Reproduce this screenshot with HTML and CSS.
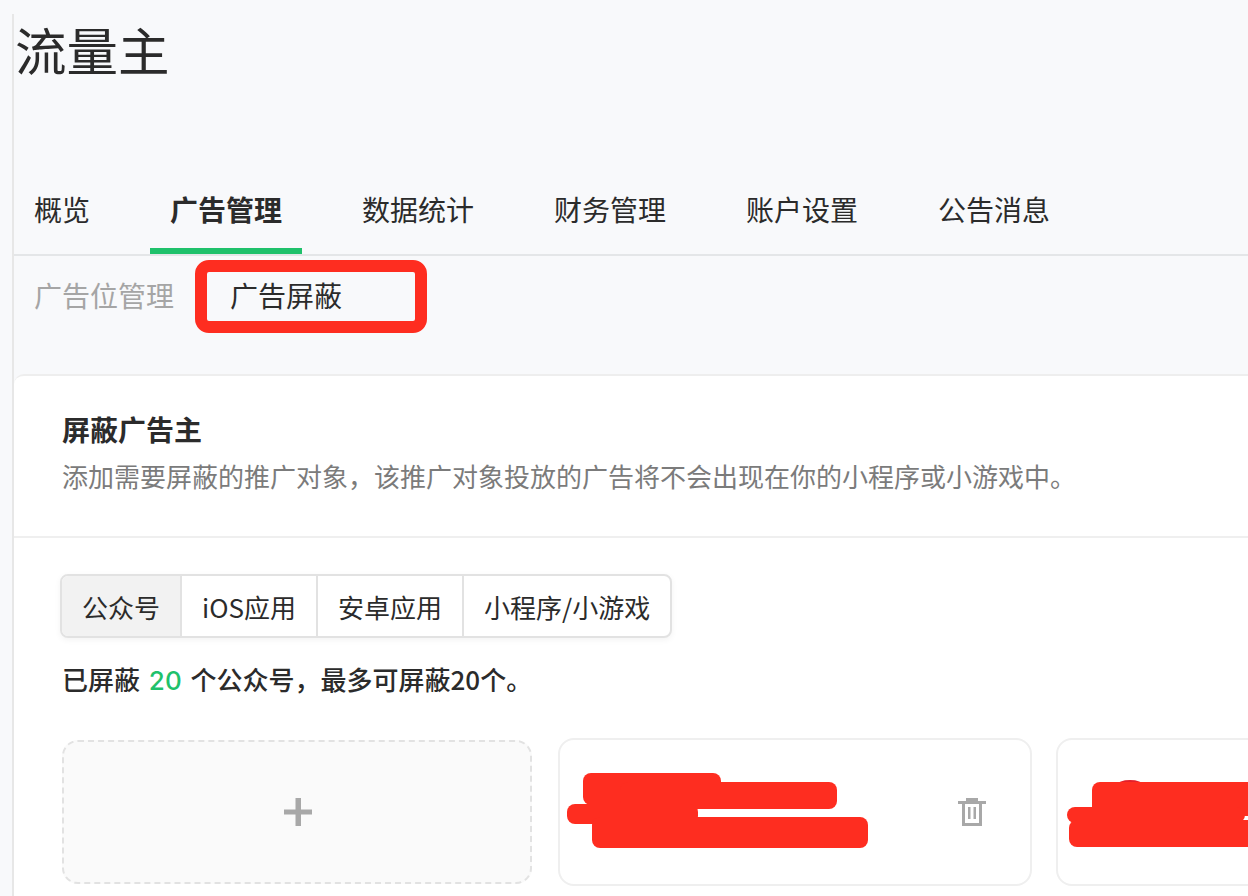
FILE: index.html
```html
<!DOCTYPE html>
<html lang="zh-CN">
<head>
<meta charset="utf-8">
<title>流量主</title>
<link rel="stylesheet" href="styles.css">
</head>
<body>
<div class="page">
  <h1 class="title">流量主</h1>
  <nav class="tabs">
    <a class="tab">概览</a>
    <a class="tab active">广告管理</a>
    <a class="tab">数据统计</a>
    <a class="tab">财务管理</a>
    <a class="tab">账户设置</a>
    <a class="tab">公告消息</a>
  </nav>
  <div class="subtabs">
    <a class="subtab">广告位管理</a>
    <a class="subtab current">广告屏蔽<span class="mark"></span></a>
  </div>
  <section class="panel">
    <header class="panel-head">
      <h2>屏蔽广告主</h2>
      <p>添加需要屏蔽的推广对象，该推广对象投放的广告将不会出现在你的小程序或小游戏中。</p>
    </header>
    <div class="panel-body">
      <div class="seg">
        <span class="seg-item on">公众号</span>
        <span class="seg-item">iOS应用</span>
        <span class="seg-item">安卓应用</span>
        <span class="seg-item">小程序/小游戏</span>
      </div>
      <p class="count">已屏蔽 <em>20</em> 个公众号，最多可屏蔽20个。</p>
      <div class="cards">
        <div class="card add">
          <svg class="plus" width="28" height="28" viewBox="0 0 28 28"><path d="M11.500 0h5.500v11.500H28v5H17V28h-5.500V16.500H0v-5h11.500z"/></svg>
        </div>
        <div class="card item">
          <span class="scrib s1"></span><span class="scrib s2"></span><span class="scrib s3"></span><span class="scrib s4"></span>
          <svg class="trash" width="28" height="28" viewBox="0 0 28 28"><path d="M8 0h12v3h8v3H0V3h8z"/><path fill-rule="evenodd" d="M4 6h20v22H4zM7 6v19h14V6z"/><path d="M10 9h2.500v12H10zM15.500 9H18v12h-2.500z"/></svg>
        </div>
        <div class="card item">
          <span class="scrib t4"></span><span class="scrib t1"></span><span class="scrib t2"></span><span class="scrib t3"></span>
        </div>
      </div>
    </div>
  </section>
</div>
</body>
</html>
```
FILE: styles.css
```css
* { box-sizing: border-box; }
html, body { margin: 0; height: 100%; }
body {
  height: 896px;
  overflow: hidden;
  background: #f8f9fb;
  font-family: "Noto Sans CJK SC", "Noto Sans", sans-serif;
  color: #2b2b2b;
}
.page {
  margin: 14px 0 0 12px;
  height: 882px;
  border-left: 2px solid #e7e7e7;
}
.title {
  margin: 0;
  height: 72px;
  padding-left: 1px;
  font-size: 51.5px;
  line-height: 70px;
  font-weight: 400;
}
.tabs {
  margin-top: 86px;
  height: 84px;
  display: flex;
  border-bottom: 2px solid #e4e6e8;
}
.tab {
  position: relative;
  width: 192px;
  padding: 17px 0 0 20px;
  font-size: 28px;
  line-height: 40px;
  white-space: nowrap;
}
.tab:first-child { width: 136px; }
.tab.active { font-weight: 700; }
.tab.active::after {
  content: "";
  position: absolute;
  left: 0;
  bottom: 0;
  width: 152px;
  height: 6px;
  background: #1fc16b;
}
.subtabs {
  display: flex;
  height: 118px;
  padding: 19px 0 0 20px;
  font-size: 28px;
  line-height: 40px;
}
.subtab { color: #a5a5a5; }
.subtab.current {
  position: relative;
  margin-left: 56px;
  color: #2b2b2b;
}
.mark {
  position: absolute;
  left: -35px;
  top: -15px;
  width: 232px;
  height: 73px;
  border: 12px solid #fe2d20;
  border-radius: 14px;
}
.panel {
  height: 522px;
  overflow: hidden;
  background: #fff;
  border-top: 2px solid #eeeeee;
  border-radius: 10px 0 0 0;
}
.panel-head {
  height: 162px;
  padding: 34px 0 0 48px;
  border-bottom: 2px solid #efefef;
}
.panel-head h2 {
  margin: 0;
  font-size: 28px;
  line-height: 38px;
  font-weight: 700;
}
.panel-head p {
  margin: 10px 0 0;
  font-size: 26px;
  line-height: 36px;
  color: #7b7b7b;
  white-space: nowrap;
}
.panel-body { padding: 36px 0 0 46px; }
.seg {
  display: inline-flex;
  height: 64px;
  border: 2px solid #e2e2e2;
  border-radius: 8px;
  box-shadow: 0 2px 6px rgba(0,0,0,.05);
  overflow: hidden;
  background: #fff;
}
.seg-item {
  display: flex;
  align-items: center;
  padding: 0 20px;
  font-size: 26px;
  border-left: 2px solid #e2e2e2;
}
.seg-item:first-child { border-left: 0; }
.seg-item.on { background: #f2f2f2; }
.count {
  margin: 22px 0 0;
  font-size: 26px;
  line-height: 38px;
  font-weight: 500;
  padding-left: 2px;
}
.count em { font-style: normal; color: #1fc16b; font-family: "Inter", sans-serif; margin: 0 3px; }
.cards {
  display: flex;
  gap: 24px;
  margin-top: 38px;
}
.card {
  position: relative;
  flex: none;
  width: 474px;
  height: 148px;
  border-radius: 16px;
  border: 2px solid #efefef;
  background: #fff;
}
.card.add {
  width: 470px;
  height: 144px;
  margin: 2px 2px 0 2px;
  padding-left: 2px;
  background: #fafafa;
  border: 2px dashed #e2e2e2;
  display: flex;
  align-items: center;
  justify-content: center;
}
.plus { fill: #a8a8a8; }
.trash { position: absolute; left: 398px; top: 58px; fill: #a8a8a8; }
.scrib { position: absolute; background: #fe2d20; border-radius: 8px; }
.s1 { left: 23px; top: 33px; width: 138px; height: 32px; }
.s2 { left: 60px; top: 42px; width: 217px; height: 27px; }
.s3 { left: 7px; top: 64px; width: 131px; height: 20px; }
.s4 { left: 32px; top: 77px; width: 276px; height: 31px; }
.t1 { left: 34px; top: 42px; width: 400px; height: 34px; }
.t2 { left: 9px; top: 67px; width: 178px; height: 16px; }
.t3 { left: 11px; top: 80px; width: 400px; height: 27px; }
.t4 { left: 59px; top: 40px; width: 26px; height: 10px; border-radius: 50%; background: #e4202a; }
```
